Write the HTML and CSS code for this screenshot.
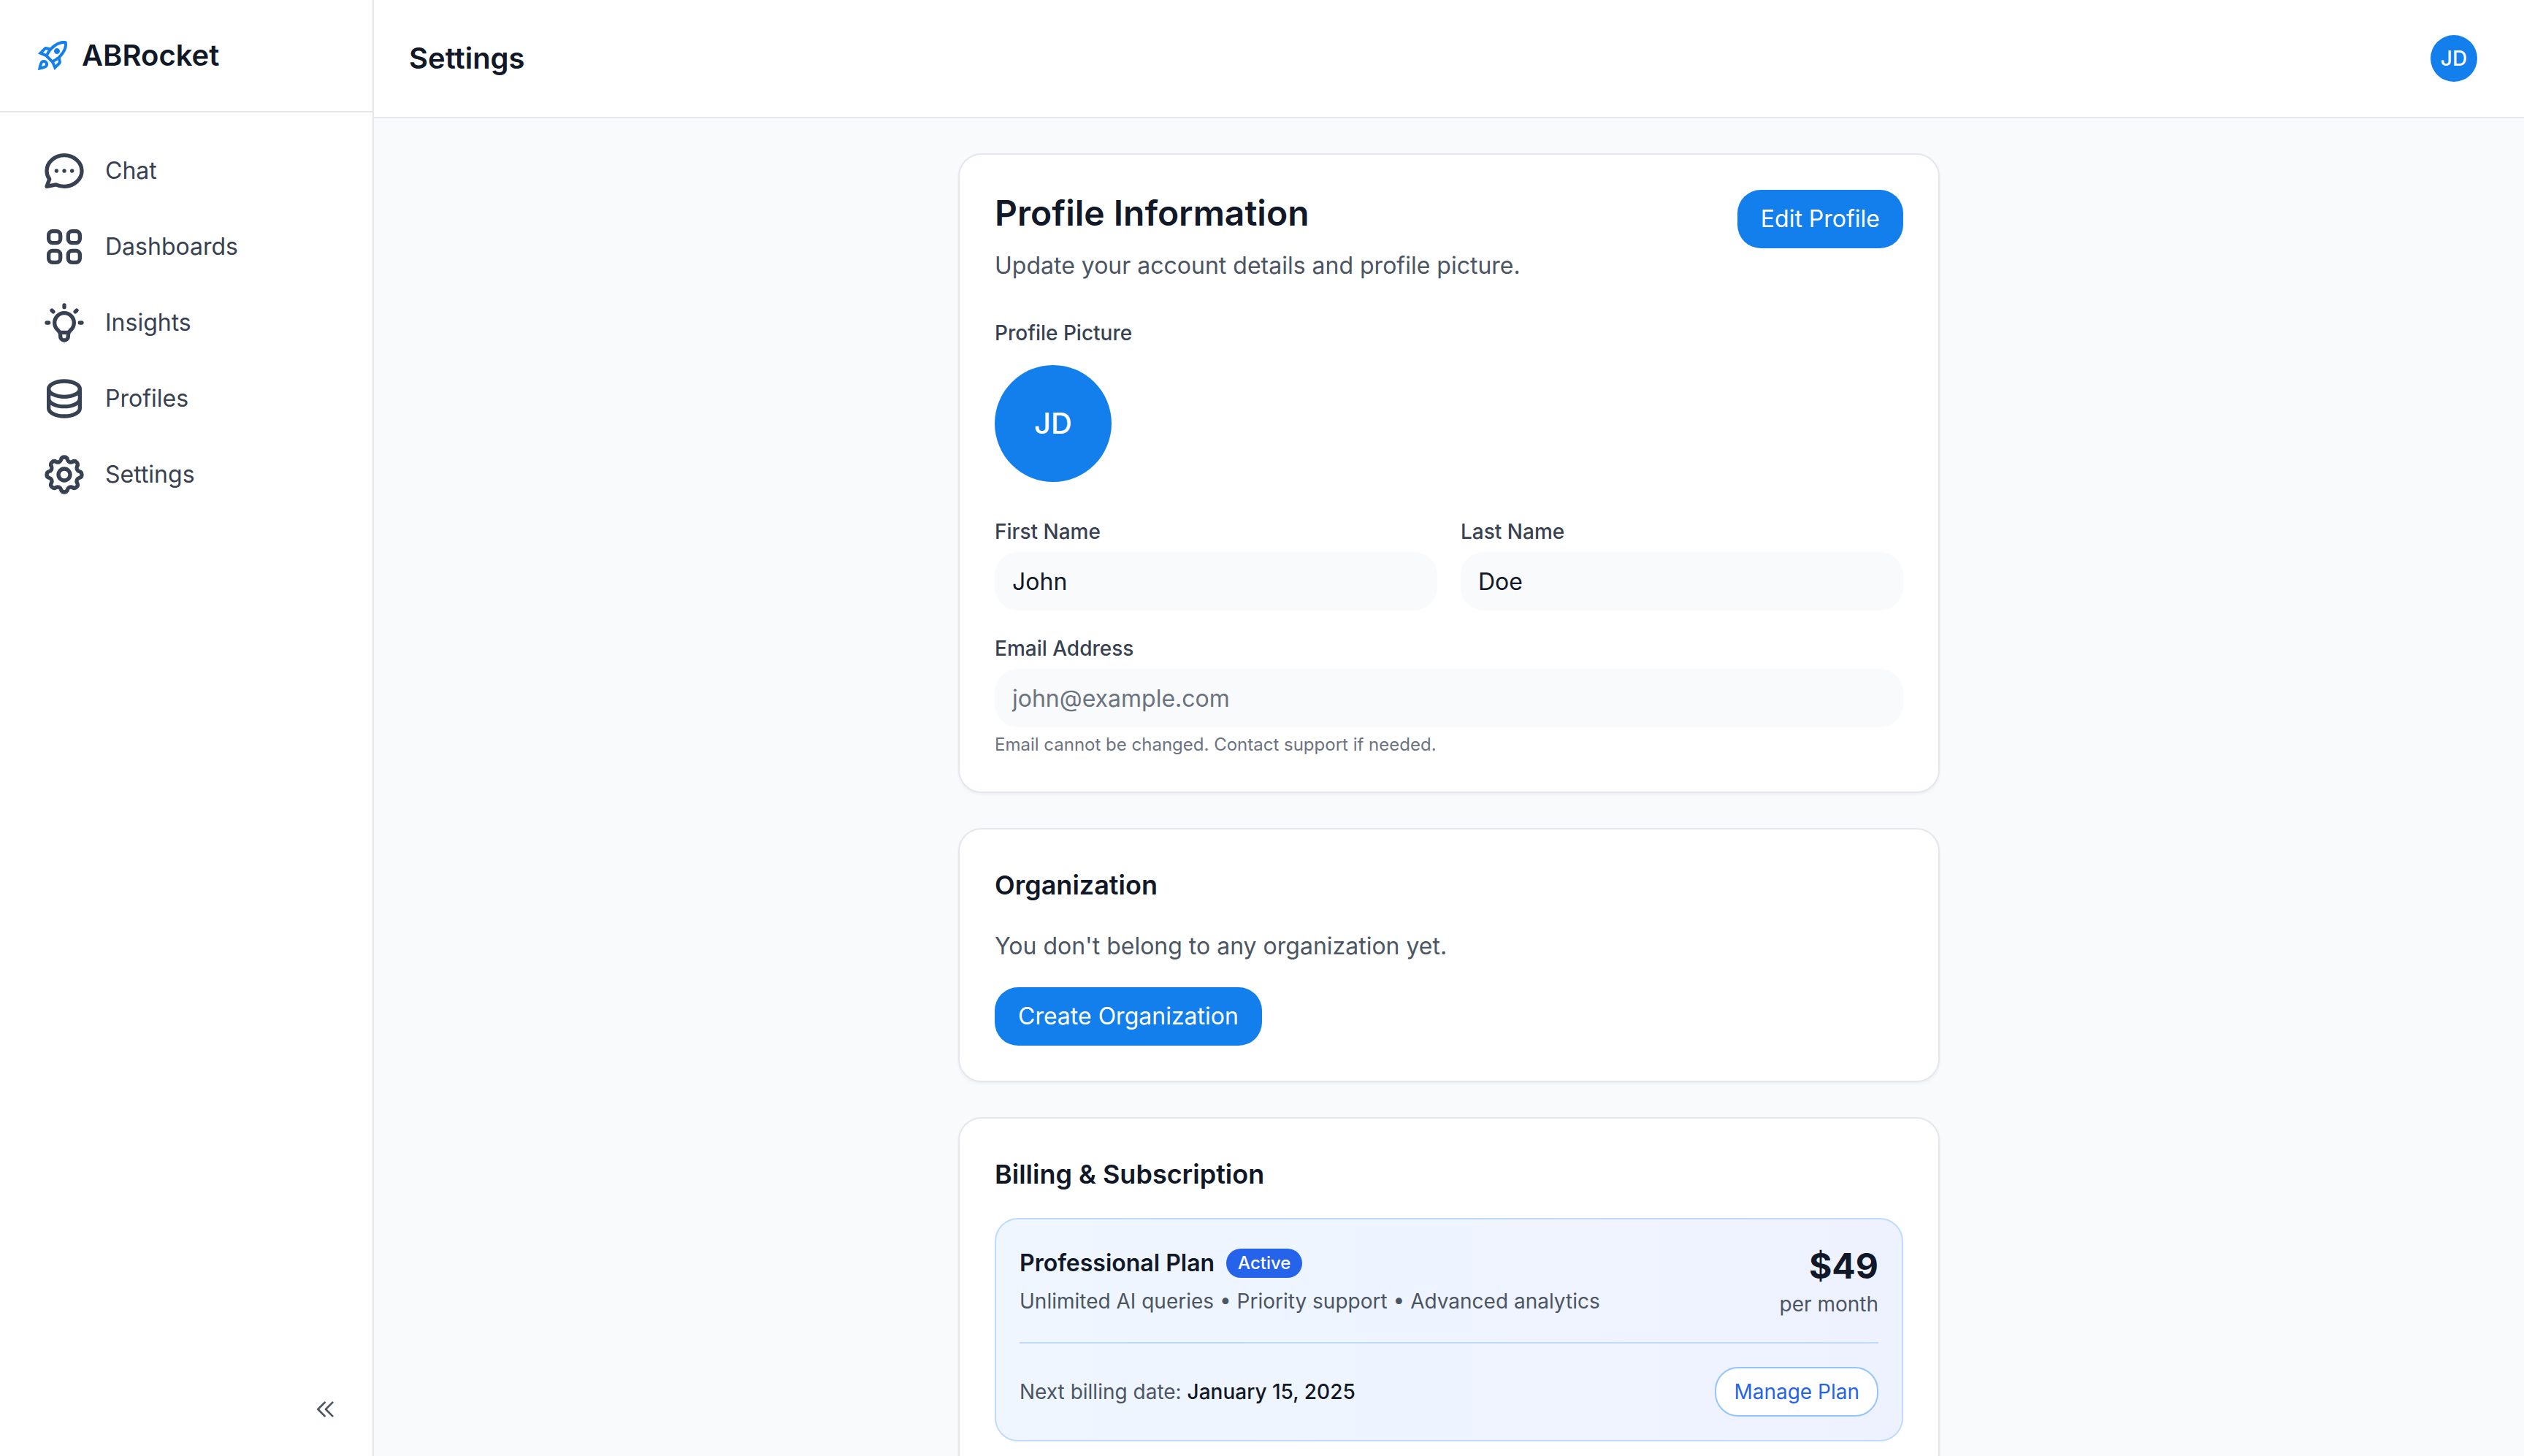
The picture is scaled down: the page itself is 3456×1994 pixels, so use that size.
FILE: index.html
```html
<!DOCTYPE html>
<html lang="en">
<head>
    <meta charset="UTF-8">
    <meta name="viewport" content="width=device-width, initial-scale=1.0">
    <title>Settings - ABRocket</title>
    <link rel="stylesheet" href="styles.css">
</head>
<body>

    <div class="app">
        <aside class="sidebar">
            <div class="brand">
                <svg class="brand-icon" viewBox="0 0 24 24" fill="currentColor" aria-hidden="true">
                    <path d="M6 15c-.83 0-1.58.34-2.12.88C2.7 17.06 2 22 2 22s4.94-.7 6.12-1.88A2.996 2.996 0 0 0 6 15zm.71 3.71c-.28.28-2.17.76-2.17.76s.47-1.88.76-2.17c.17-.19.42-.3.7-.3a1.003 1.003 0 0 1 .71 1.71zm10.71-5.06c6.36-6.36 4.24-11.31 4.24-11.31S16.71.22 10.35 6.58l-2.49-.5a2.03 2.03 0 0 0-1.81.55L2 10.69l5 2.14L11.17 17l2.14 5 4.05-4.05c.47-.47.68-1.15.55-1.81l-.49-2.49zM7.41 10.83l-1.91-.82 1.97-1.97 1.44.29c-.57.83-1.08 1.7-1.5 2.5zm6.58 7.67-.82-1.91c.8-.42 1.67-.93 2.49-1.5l.29 1.44-1.96 1.97zM16 12.24c-1.32 1.32-3.38 2.4-4.04 2.73l-2.93-2.93c.32-.65 1.4-2.71 2.73-4.04 4.68-4.68 8.23-3.99 8.23-3.99s.69 3.55-3.99 8.23zM15 11c1.1 0 2-.9 2-2s-.9-2-2-2-2 .9-2 2 .9 2 2 2z"/>
                </svg>
                <span class="brand-name">ABRocket</span>
            </div>

            <nav class="nav">
                <a class="nav-link" href="#chat">
                    <svg class="nav-icon" viewBox="0 0 24 24" aria-hidden="true">
                        <path d="M8 12h.01M12 12h.01M16 12h.01M21 12c0 4.418-4.03 8-9 8a9.863 9.863 0 01-4.255-.949L3 20l1.395-3.72C3.512 15.042 3 13.574 3 12c0-4.418 4.03-8 9-8s9 3.582 9 8z"/>
                    </svg>
                    Chat
                </a>
                <a class="nav-link" href="#dashboards">
                    <svg class="nav-icon" viewBox="0 0 24 24" aria-hidden="true">
                        <path d="M4 6a2 2 0 012-2h2a2 2 0 012 2v2a2 2 0 01-2 2H6a2 2 0 01-2-2V6zM14 6a2 2 0 012-2h2a2 2 0 012 2v2a2 2 0 01-2 2h-2a2 2 0 01-2-2V6zM4 16a2 2 0 012-2h2a2 2 0 012 2v2a2 2 0 01-2 2H6a2 2 0 01-2-2v-2zM14 16a2 2 0 012-2h2a2 2 0 012 2v2a2 2 0 01-2 2h-2a2 2 0 01-2-2v-2z"/>
                    </svg>
                    Dashboards
                </a>
                <a class="nav-link" href="#insights">
                    <svg class="nav-icon" viewBox="0 0 24 24" aria-hidden="true">
                        <path d="M9.663 17h4.673M12 3v1m6.364 1.636l-.707.707M21 12h-1M4 12H3m3.343-5.657l-.707-.707m2.828 9.9a5 5 0 117.072 0l-.548.547A3.374 3.374 0 0014 18.469V19a2 2 0 11-4 0v-.531c0-.895-.356-1.754-.988-2.386l-.548-.547z"/>
                    </svg>
                    Insights
                </a>
                <a class="nav-link" href="#profiles">
                    <svg class="nav-icon" viewBox="0 0 24 24" aria-hidden="true">
                        <path d="M4 7v10c0 2.21 3.582 4 8 4s8-1.79 8-4V7M4 7c0 2.21 3.582 4 8 4s8-1.79 8-4M4 7c0-2.21 3.582-4 8-4s8 1.79 8 4m0 5c0 2.21-3.582 4-8 4s-8-1.79-8-4"/>
                    </svg>
                    Profiles
                </a>
                <a class="nav-link" href="#settings">
                    <svg class="nav-icon" viewBox="0 0 24 24" aria-hidden="true">
                        <path d="M10.325 4.317c.426-1.756 2.924-1.756 3.35 0a1.724 1.724 0 002.573 1.066c1.543-.94 3.31.826 2.37 2.37a1.724 1.724 0 001.065 2.572c1.756.426 1.756 2.924 0 3.35a1.724 1.724 0 00-1.066 2.573c.94 1.543-.826 3.31-2.37 2.37a1.724 1.724 0 00-2.572 1.065c-.426 1.756-2.924 1.756-3.35 0a1.724 1.724 0 00-2.573-1.066c-1.543.94-3.31-.826-2.37-2.37a1.724 1.724 0 00-1.065-2.572c-1.756-.426-1.756-2.924 0-3.35a1.724 1.724 0 001.066-2.573c-.94-1.543.826-3.31 2.37-2.37.996.608 2.296.07 2.572-1.065z"/>
                        <path d="M15 12a3 3 0 11-6 0 3 3 0 016 0z"/>
                    </svg>
                    Settings
                </a>
            </nav>

            <div class="sidebar-footer">
                <button class="collapse-btn" type="button" aria-label="Collapse sidebar">
                    <svg class="collapse-icon" viewBox="0 0 24 24" aria-hidden="true">
                        <path d="M11 19l-7-7 7-7m8 14l-7-7 7-7"/>
                    </svg>
                </button>
            </div>
        </aside>

        <div class="content">
            <header class="topbar">
                <h1>Settings</h1>
                <button class="avatar avatar-small" type="button" aria-label="Account menu">JD</button>
            </header>

            <main class="main">
                <div class="cards">
                    <section class="card">
                        <div class="profile-header">
                            <div>
                                <h2 class="profile-title">Profile Information</h2>
                                <p class="text">Update your account details and profile picture.</p>
                            </div>
                            <button class="btn" type="button">Edit Profile</button>
                        </div>

                        <div class="picture">
                            <p class="label">Profile Picture</p>
                            <div class="avatar avatar-large">JD</div>
                        </div>

                        <form class="profile-form">
                            <div class="field">
                                <label class="label" for="first-name">First Name</label>
                                <input class="input" id="first-name" type="text" value="John" readonly>
                            </div>
                            <div class="field">
                                <label class="label" for="last-name">Last Name</label>
                                <input class="input" id="last-name" type="text" value="Doe" readonly>
                            </div>
                            <div class="field field-wide">
                                <label class="label" for="email">Email Address</label>
                                <input class="input" id="email" type="email" value="john@example.com" disabled>
                                <p class="hint">Email cannot be changed. Contact support if needed.</p>
                            </div>
                        </form>
                    </section>

                    <section class="card">
                        <h2 class="card-title">Organization</h2>
                        <p class="text org-text">You don't belong to any organization yet.</p>
                        <button class="btn" type="button">Create Organization</button>
                    </section>

                    <section class="card">
                        <h2 class="card-title">Billing &amp; Subscription</h2>
                        <div class="plan">
                            <div class="plan-row">
                                <div>
                                    <div class="plan-heading">
                                        <h3>Professional Plan</h3>
                                        <span class="badge">Active</span>
                                    </div>
                                    <p class="small">Unlimited AI queries • Priority support • Advanced analytics</p>
                                </div>
                                <div class="plan-price">
                                    <p class="price">$49</p>
                                    <p class="small">per month</p>
                                </div>
                            </div>
                            <div class="plan-row plan-footer">
                                <p class="small">Next billing date: <strong>January 15, 2025</strong></p>
                                <button class="manage-btn" type="button">Manage Plan</button>
                            </div>
                        </div>
                    </section>
                </div>
            </main>
        </div>
    </div>

</body>
</html>
```
FILE: styles.css
```css
* {
    box-sizing: border-box;
}

body {
    margin: 0;
    font-family: Inter, 'Liberation Sans', sans-serif;
    font-size: 32px;
    line-height: 48px;
    color: #111827;
    background: #f9fafb;
    -webkit-font-smoothing: antialiased;
}

h1, h2, h3, p {
    margin: 0;
}

button, input {
    font: inherit;
    border: none;
}

button {
    cursor: pointer;
}

.app {
    display: flex;
    height: 100vh;
}

/* Sidebar */
.sidebar {
    flex: none;
    width: 512px;
    display: flex;
    flex-direction: column;
    background: white;
    border-right: 2px solid #e5e7eb;
}

.brand {
    display: flex;
    align-items: center;
    gap: 16px;
    padding: 48px;
    border-bottom: 2px solid #e5e7eb;
}

.brand-icon {
    width: 48px;
    height: 48px;
    color: #137fec;
}

.brand-name {
    font-size: 40px;
    line-height: 56px;
    font-weight: 600;
}

.nav {
    flex: 1;
    display: flex;
    flex-direction: column;
    gap: 8px;
    padding: 32px;
}

.nav-link {
    display: flex;
    align-items: center;
    gap: 24px;
    padding: 16px 24px;
    border-radius: 16px;
    color: #374151;
    text-decoration: none;
}

.nav-link:hover {
    background: #f3f4f6;
}

.nav-icon,
.collapse-icon {
    fill: none;
    stroke: currentColor;
    stroke-width: 2;
    stroke-linecap: round;
    stroke-linejoin: round;
}

.nav-icon {
    width: 64px;
    height: 64px;
}

.sidebar-footer {
    display: flex;
    justify-content: flex-end;
    padding: 32px;
}

.collapse-btn {
    display: flex;
    padding: 16px;
    background: none;
    color: #4b5563;
}

.collapse-icon {
    width: 32px;
    height: 32px;
}

/* Top bar */
.content {
    flex: 1;
    min-width: 0;
    display: flex;
    flex-direction: column;
}

.topbar {
    display: flex;
    align-items: center;
    justify-content: space-between;
    padding: 48px 64px 48px 48px;
    background: white;
    border-bottom: 2px solid #e5e7eb;
}

.topbar h1 {
    font-size: 40px;
    line-height: 56px;
    font-weight: 600;
}

.avatar {
    display: flex;
    align-items: center;
    justify-content: center;
    padding: 0;
    border-radius: 50%;
    background: #137fec;
    color: white;
    font-weight: 500;
}

.avatar-small {
    width: 64px;
    height: 64px;
    font-size: 28px;
    line-height: 40px;
}

.avatar-large {
    width: 160px;
    height: 160px;
    font-size: 40px;
    line-height: 56px;
}

/* Cards */
.main {
    flex: 1;
    min-height: 0;
    padding: 48px;
    overflow-y: auto;
    scrollbar-width: none;
}

.cards {
    display: flex;
    flex-direction: column;
    gap: 48px;
    max-width: 1344px;
    margin: 0 auto;
}

.card {
    padding: 48px;
    background: white;
    border: 2px solid #e5e7eb;
    border-radius: 32px;
    box-shadow: 0 2px 4px rgba(0, 0, 0, 0.05);
}

.card-title {
    margin-bottom: 32px;
    font-size: 36px;
    line-height: 56px;
    font-weight: 600;
}

.text {
    color: #4b5563;
}

.small {
    font-size: 28px;
    line-height: 40px;
    color: #4b5563;
}

.small strong {
    font-weight: 500;
    color: #111827;
}

.btn {
    padding: 16px 32px;
    border-radius: 32px;
    background: #137fec;
    color: white;
}

.btn:hover {
    background: #1171d4;
}

/* Profile */
.profile-header {
    display: flex;
    align-items: flex-start;
    justify-content: space-between;
    margin-bottom: 48px;
}

.profile-title {
    margin-bottom: 16px;
    font-size: 48px;
    line-height: 64px;
    font-weight: 600;
}

.label {
    font-size: 28px;
    line-height: 40px;
    font-weight: 500;
    color: #374151;
}

.picture {
    display: flex;
    flex-direction: column;
    gap: 24px;
    margin-bottom: 48px;
}

.profile-form {
    display: grid;
    grid-template-columns: 1fr 1fr;
    gap: 32px;
}

.field {
    display: flex;
    flex-direction: column;
    gap: 8px;
}

.field-wide {
    grid-column: span 2;
}

.input {
    width: 100%;
    height: 80px;
    padding: 16px 24px;
    border-radius: 32px;
    background: #f9fafb;
    color: #111827;
}

.input:disabled {
    color: #6b7280;
}

.hint {
    font-size: 24px;
    line-height: 32px;
    color: #6b7280;
}

/* Organization */
.org-text {
    margin-bottom: 32px;
}

/* Billing */
.plan {
    padding: 32px;
    border: 2px solid #bfdbfe;
    border-radius: 32px;
    background: linear-gradient(to right, #eff6ff, #eef2ff);
}

.plan-row {
    display: flex;
    align-items: center;
    justify-content: space-between;
}

.plan-heading {
    display: flex;
    align-items: center;
    gap: 16px;
    margin-bottom: 8px;
}

.plan-heading h3 {
    font-size: 32px;
    line-height: 48px;
    font-weight: 600;
}

.badge {
    padding: 4px 16px;
    border-radius: 20px;
    background: #2563eb;
    color: white;
    font-size: 24px;
    line-height: 32px;
    font-weight: 500;
}

.plan-price {
    text-align: right;
}

.price {
    font-size: 48px;
    line-height: 64px;
    font-weight: 700;
}

.plan-footer {
    margin-top: 32px;
    padding-top: 32px;
    border-top: 2px solid #bfdbfe;
}

.manage-btn {
    padding: 12px 24px;
    border: 2px solid #93c5fd;
    border-radius: 32px;
    background: white;
    color: #2563eb;
    font-size: 28px;
    line-height: 40px;
}

.manage-btn:hover {
    background: #eff6ff;
}
```
